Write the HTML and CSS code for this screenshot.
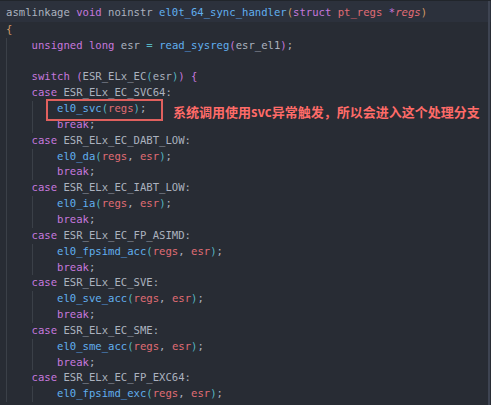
FILE: index.html
```html
<!DOCTYPE html>
<html>
<head>
<meta charset="utf-8">
<link rel="stylesheet" href="styles.css">
</head>
<body>
<div class="editor">
  <div class="code">
    <div class="ln cur"><span class="p">asmlinkage </span><span class="k">void</span><span class="p"> noinstr </span><span class="f">el0t_64_sync_handler</span><span class="b1">(</span><span class="k">struct</span> <span class="v">pt_regs</span> <span class="k">*</span><span class="v it">regs</span><span class="b1">)</span></div>
    <div class="ln"><span class="b1">{</span></div>
    <div class="ln g1">    <span class="k">unsigned long</span> <span class="p">esr</span> <span class="c">=</span> <span class="f">read_sysreg</span><span class="b2">(</span><span class="p">esr_el1</span><span class="b2">)</span><span class="p">;</span></div>
    <div class="ln g1"> </div>
    <div class="ln g1">    <span class="k">switch</span> <span class="b2">(</span><span class="p">ESR_ELx_EC</span><span class="b3">(</span><span class="p">esr</span><span class="b3">)</span><span class="b2">)</span> <span class="b2">{</span></div>
    <div class="ln g1">    <span class="k">case</span> <span class="p">ESR_ELx_EC_SVC64:</span></div>
    <div class="ln g1 g2">        <span class="f">el0_svc</span><span class="b3">(</span><span class="v">regs</span><span class="b3">)</span><span class="p">;</span></div>
    <div class="ln g1 g2">        <span class="k">break</span><span class="p">;</span></div>
    <div class="ln g1">    <span class="k">case</span> <span class="p">ESR_ELx_EC_DABT_LOW:</span></div>
    <div class="ln g1 g2">        <span class="f">el0_da</span><span class="b3">(</span><span class="v">regs</span><span class="p">, </span><span class="v">esr</span><span class="b3">)</span><span class="p">;</span></div>
    <div class="ln g1 g2">        <span class="k">break</span><span class="p">;</span></div>
    <div class="ln g1">    <span class="k">case</span> <span class="p">ESR_ELx_EC_IABT_LOW:</span></div>
    <div class="ln g1 g2">        <span class="f">el0_ia</span><span class="b3">(</span><span class="v">regs</span><span class="p">, </span><span class="v">esr</span><span class="b3">)</span><span class="p">;</span></div>
    <div class="ln g1 g2">        <span class="k">break</span><span class="p">;</span></div>
    <div class="ln g1">    <span class="k">case</span> <span class="p">ESR_ELx_EC_FP_ASIMD:</span></div>
    <div class="ln g1 g2">        <span class="f">el0_fpsimd_acc</span><span class="b3">(</span><span class="v">regs</span><span class="p">, </span><span class="v">esr</span><span class="b3">)</span><span class="p">;</span></div>
    <div class="ln g1 g2">        <span class="k">break</span><span class="p">;</span></div>
    <div class="ln g1">    <span class="k">case</span> <span class="p">ESR_ELx_EC_SVE:</span></div>
    <div class="ln g1 g2">        <span class="f">el0_sve_acc</span><span class="b3">(</span><span class="v">regs</span><span class="p">, </span><span class="v">esr</span><span class="b3">)</span><span class="p">;</span></div>
    <div class="ln g1 g2">        <span class="k">break</span><span class="p">;</span></div>
    <div class="ln g1">    <span class="k">case</span> <span class="p">ESR_ELx_EC_SME:</span></div>
    <div class="ln g1 g2">        <span class="f">el0_sme_acc</span><span class="b3">(</span><span class="v">regs</span><span class="p">, </span><span class="v">esr</span><span class="b3">)</span><span class="p">;</span></div>
    <div class="ln g1 g2">        <span class="k">break</span><span class="p">;</span></div>
    <div class="ln g1">    <span class="k">case</span> <span class="p">ESR_ELx_EC_FP_EXC64:</span></div>
    <div class="ln g1 g2">        <span class="f">el0_fpsimd_exc</span><span class="b3">(</span><span class="v">regs</span><span class="p">, </span><span class="v">esr</span><span class="b3">)</span><span class="p">;</span></div>
  </div>
  <div class="mark"></div>
  <div class="note">系统调用使用svc异常触发，所以会进入这个处理分支</div>
  <div class="edge"></div>
</div>
</body>
</html>
```
FILE: styles.css
```css
html, body {
  margin: 0;
  padding: 0;
  background: #282c34;
  overflow: hidden;
}
.editor {
  position: relative;
  width: 491px;
  height: 405px;
  background: #282c34;
  border-top: 1px solid #21252b;
  box-sizing: border-box;
  overflow: hidden;
}
.code {
  font-family: "DejaVu Sans Mono", monospace;
  font-size: 10.6px;
  line-height: 15.85px;
  color: #abb2bf;
  padding-left: 6px;
}
.ln {
  position: relative;
  height: 15.85px;
  white-space: pre;
}
.cur {
  background: #2c313c;
  margin-left: -6px;
  padding-left: 6px;
  padding-top: 4px;
  padding-bottom: 1px;
}
.g1::before,
.g2::after {
  content: "";
  position: absolute;
  top: 0;
  bottom: 0;
  width: 1px;
  background: #3b4048;
}
.g1::before { left: 0; }
.g2::after { left: 25.5px; }
.p { color: #abb2bf; }
.k { color: #c678dd; }
.f { color: #61afef; }
.v { color: #e06c75; }
.it { font-style: italic; }
.c { color: #56b6c2; }
.b1 { color: #d19a66; }
.b2 { color: #c678dd; }
.b3 { color: #56b6c2; }
.mark {
  position: absolute;
  left: 46px;
  top: 98px;
  width: 117px;
  height: 22px;
  border: 2px solid #e0605e;
  box-sizing: border-box;
}
.note {
  position: absolute;
  left: 173px;
  top: 102px;
  font-family: "Noto Sans CJK SC", "Noto Sans", sans-serif;
  font-weight: bold;
  font-size: 13px;
  line-height: 17px;
  color: #ff6b68;
  white-space: nowrap;
}
.edge {
  position: absolute;
  right: 1px;
  top: 0;
  width: 2px;
  height: 100%;
  background: #3e4452;
}
```
